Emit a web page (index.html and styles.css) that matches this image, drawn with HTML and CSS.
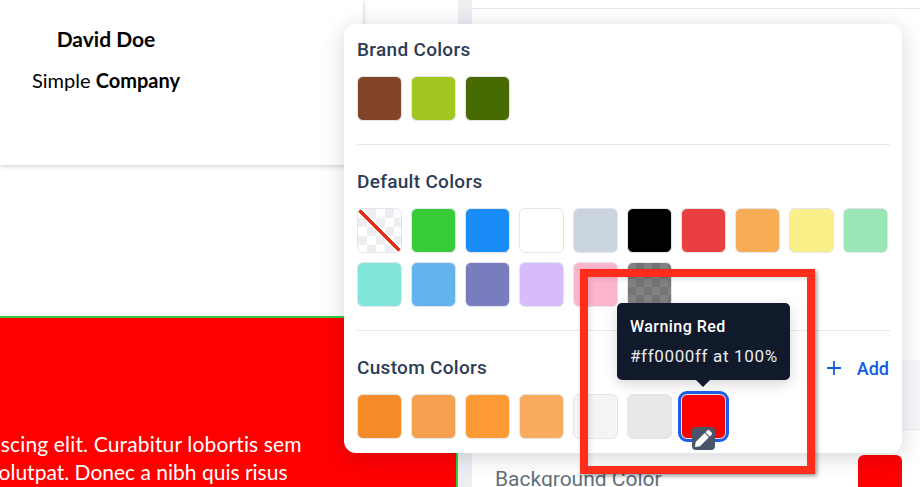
FILE: index.html
```html
<!DOCTYPE html>
<html lang="en">
<head>
    <meta charset="UTF-8">
    <meta name="viewport" content="width=device-width, initial-scale=1.0">
    <title>Color Picker</title>
    <link rel="stylesheet" href="styles.css">
</head>
<body>
    <div class="page">
        <div class="canvas">
            <div class="profile">
                <div class="profile-text">
                    <h2 class="profile-name">David Doe</h2>
                    <p class="profile-company">Simple <b>Company</b></p>
                </div>
            </div>
            <div class="hero">
                <p class="hero-line hero-line-a">adipiscing elit. Curabitur lobortis sem</p>
                <p class="hero-line hero-line-b">volutpat. Donec a nibh quis risus</p>
            </div>
        </div>

        <div class="gutter"></div>

        <div class="panel">
            <div class="panel-top"></div>
            <div class="panel-band"></div>
            <div class="panel-row">
                <span class="panel-label">Background Color</span>
                <span class="panel-swatch"></span>
            </div>
        </div>

        <div class="popover">
            <section class="group">
                <h3 class="group-title">Brand Colors</h3>
                <div class="swatches">
                    <span class="swatch c-brown"></span>
                    <span class="swatch c-lime"></span>
                    <span class="swatch c-forest"></span>
                </div>
            </section>
            <section class="group">
                <h3 class="group-title">Default Colors</h3>
                <div class="swatches">
                    <span class="swatch c-none"></span>
                    <span class="swatch c-green"></span>
                    <span class="swatch c-blue"></span>
                    <span class="swatch c-white"></span>
                    <span class="swatch c-slate"></span>
                    <span class="swatch c-black"></span>
                    <span class="swatch c-red"></span>
                    <span class="swatch c-orange"></span>
                    <span class="swatch c-yellow"></span>
                    <span class="swatch c-mint"></span>
                    <span class="swatch c-teal"></span>
                    <span class="swatch c-sky"></span>
                    <span class="swatch c-indigo"></span>
                    <span class="swatch c-lavender"></span>
                    <span class="swatch c-pink"></span>
                    <span class="swatch c-smoke"></span>
                </div>
            </section>
            <section class="group">
                <div class="group-head">
                    <h3 class="group-title">Custom Colors</h3>
                    <button class="add-btn">
                        <svg class="add-icon" viewBox="0 0 16 16" aria-hidden="true">
                            <path d="M8 1v14M1 8h14"></path>
                        </svg>
                        Add
                    </button>
                </div>
                <div class="swatches">
                    <span class="swatch c-custom1"></span>
                    <span class="swatch c-custom2"></span>
                    <span class="swatch c-custom3"></span>
                    <span class="swatch c-custom4"></span>
                    <span class="swatch c-custom5"></span>
                    <span class="swatch c-custom6"></span>
                    <span class="swatch c-warning selected">
                        <span class="edit-badge">
                            <svg viewBox="0 0 512 512" aria-hidden="true">
                                <path d="M497.9 142.1l-46.1 46.1c-4.7 4.7-12.3 4.7-17 0l-111-111c-4.7-4.7-4.7-12.3 0-17l46.1-46.1c18.7-18.7 49.1-18.7 67.9 0l60.1 60.1c18.8 18.7 18.8 49.1 0 67.9zM284.2 99.8L21.6 362.4.4 483.9c-2.9 16.4 11.4 30.6 27.8 27.8l121.5-21.3 262.6-262.6c4.7-4.7 4.7-12.3 0-17l-111-111c-4.8-4.7-12.4-4.7-17.1 0z"></path>
                            </svg>
                        </span>
                    </span>
                </div>
            </section>
        </div>

        <div class="callout"></div>

        <div class="tooltip">
            <strong class="tooltip-title">Warning Red</strong>
            <span class="tooltip-value">#ff0000ff at 100%</span>
        </div>
    </div>
</body>
</html>
```

FILE: styles.css
```css
* {
    box-sizing: border-box;
}

body {
    margin: 0;
    background-color: #ffffff;
    font-family: 'Roboto', sans-serif;
}

.page {
    position: relative;
    display: flex;
    width: 920px;
    height: 487px;
    overflow: hidden;
}

/* left side, the page being edited */
.canvas {
    display: flex;
    flex-direction: column;
    justify-content: space-between;
    width: 458px;
    font-family: 'Lato', sans-serif;
    color: #000000;
}

.profile {
    width: 363px;
    height: 165px;
    background-color: #ffffff;
    box-shadow: 0 1px 5px rgba(0, 0, 0, 0.22);
}

.profile-text {
    width: 212px;
    padding-top: 26px;
    text-align: center;
}

.profile-name {
    margin: 0;
    font-size: 21px;
    line-height: 26px;
    font-weight: 700;
}

.profile-company {
    margin: 15px 0 0;
    font-size: 20px;
    line-height: 26px;
}

.hero {
    height: 171px;
    padding-top: 112px;
    overflow: hidden;
    background-color: #ff0000;
    border-top: 2px solid #37cb37;
    border-right: 2px solid #37cb37;
    color: #ffffff;
}

.hero-line {
    margin: 0;
    font-size: 21px;
    line-height: 28px;
    white-space: nowrap;
}

.hero-line-a {
    margin-left: -44px;
    letter-spacing: 0.15px;
}

.hero-line-b {
    margin-left: -12px;
}

.gutter {
    width: 14px;
    background-color: #edeef2;
}

/* right side, the settings panel */
.panel {
    display: flex;
    flex: 1;
    flex-direction: column;
    background-color: #ffffff;
}

.panel-top {
    height: 9px;
    border-bottom: 1px solid #e6e7eb;
}

.panel-band {
    height: 71px;
    margin-top: 351px;
    background-color: #f8f8fb;
    border-bottom: 1px solid #e9eaee;
}

.panel-row {
    display: flex;
    justify-content: space-between;
    height: 32px;
    margin-top: 25px;
    padding: 0 18px 0 23px;
    overflow: hidden;
}

.panel-label {
    margin-top: 11px;
    font-size: 21px;
    line-height: 26px;
    color: #5f6f7c;
}

.panel-swatch {
    width: 44px;
    height: 44px;
    background-color: #ff0000;
    border-radius: 6px;
}

/* color picker popover */
.popover {
    position: absolute;
    top: 24px;
    left: 344px;
    width: 558px;
    height: 429px;
    padding: 14px 12px 14px 13px;
    background-color: #ffffff;
    border-radius: 12px;
    box-shadow: 0 4px 22px rgba(20, 30, 50, 0.18);
}

.group {
    padding-bottom: 23px;
    margin-bottom: 25px;
    border-bottom: 1px solid #e8e9ee;
}

.group:last-child {
    padding-bottom: 0;
    margin-bottom: 0;
    border-bottom: none;
}

.group-head {
    display: flex;
    align-items: center;
    justify-content: space-between;
}

.group-title {
    margin: 0;
    font-size: 19px;
    line-height: 24px;
    font-weight: 500;
    letter-spacing: 0.3px;
    color: #2d3b55;
}

.add-btn {
    display: flex;
    align-items: center;
    gap: 15px;
    padding: 0 1px 0 0;
    border: none;
    background: none;
    font-family: inherit;
    font-size: 18px;
    font-weight: 500;
    color: #0f5ce6;
}

.add-icon {
    width: 16px;
    height: 16px;
    fill: none;
    stroke: #0f5ce6;
    stroke-width: 1.8;
}

.swatches {
    display: grid;
    grid-template-columns: repeat(10, 45px);
    gap: 9px;
    margin-top: 14px;
}

.swatch {
    position: relative;
    height: 45px;
    border-radius: 6px;
    border: 1px solid #e2e5ec;
}

.c-brown { background-color: #82452a; }
.c-lime { background-color: #a3c720; }
.c-forest { background-color: #476b00; }
.c-green { background-color: #37cb37; }
.c-blue { background-color: #1a8cf8; }
.c-white { background-color: #ffffff; }
.c-slate { background-color: #cbd5e0; }
.c-black { background-color: #000000; }
.c-red { background-color: #e93f40; }
.c-orange { background-color: #f6ad55; }
.c-yellow { background-color: #faf089; }
.c-mint { background-color: #9ae6b4; }
.c-teal { background-color: #81e6d9; }
.c-sky { background-color: #63b3ed; }
.c-indigo { background-color: #7a7dbd; }
.c-lavender { background-color: #d6bcfa; }
.c-pink { background-color: #fbb6ce; }
.c-custom1 { background-color: #f38b28; }
.c-custom2 { background-color: #f4a04f; }
.c-custom3 { background-color: #fd9a33; }
.c-custom4 { background-color: #fbab5f; }
.c-custom5 { background-color: #f4f4f5; }
.c-custom6 { background-color: #e8e8e8; }
.c-warning { background-color: #ff0000; }

.c-none {
    background:
        linear-gradient(to top right, transparent calc(50% - 1.5px), #e0301e calc(50% - 1.5px), #e0301e calc(50% + 1.5px), transparent calc(50% + 1.5px)),
        repeating-conic-gradient(#eceef2 0% 25%, #ffffff 0% 50%) 0 0 / 18px 18px;
}

.c-smoke {
    background: repeating-conic-gradient(#757575 0% 25%, #828282 0% 50%) 0 0 / 16px 16px;
}

.selected {
    outline: 3px solid #1c5fe8;
    outline-offset: 0;
}

.edit-badge {
    position: absolute;
    left: 10px;
    bottom: -12px;
    display: flex;
    align-items: center;
    justify-content: center;
    width: 23px;
    height: 23px;
    background-color: #4a5568;
    border-radius: 4px;
}

.edit-badge svg {
    width: 17px;
    height: 17px;
    fill: #ffffff;
}

/* red box drawn over the screenshot */
.callout {
    position: absolute;
    top: 269px;
    left: 580px;
    width: 235px;
    height: 205px;
    border: 8px solid #ff2d1c;
    box-shadow: 2px 2px 4px rgba(0, 0, 0, 0.4), inset 2px 2px 5px rgba(0, 0, 0, 0.12);
}

.tooltip {
    position: absolute;
    top: 303px;
    left: 617px;
    display: flex;
    flex-direction: column;
    gap: 8px;
    width: 173px;
    height: 77px;
    padding: 14px 13px 0;
    background-color: #111a2b;
    border-radius: 5px;
    box-shadow: 0 4px 14px rgba(0, 0, 0, 0.16);
    color: #ffffff;
}

.tooltip::after {
    content: '';
    position: absolute;
    top: 100%;
    left: 79px;
    border-top: 7px solid #111a2b;
    border-left: 7px solid transparent;
    border-right: 7px solid transparent;
}

.tooltip-title {
    font-size: 16px;
    line-height: 20px;
    font-weight: 500;
    letter-spacing: 0.45px;
}

.tooltip-value {
    font-size: 17px;
    line-height: 22px;
    letter-spacing: 0.65px;
    white-space: nowrap;
    color: #e8eaee;
}
```
